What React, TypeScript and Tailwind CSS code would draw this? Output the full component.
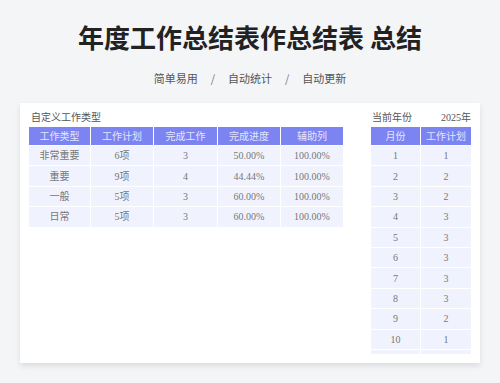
import { Fragment } from 'react';

const types = [
  { name: '非常重要', plan: '6项', done: '3', progress: '50.00%', aux: '100.00%' },
  { name: '重要', plan: '9项', done: '4', progress: '44.44%', aux: '100.00%' },
  { name: '一般', plan: '5项', done: '3', progress: '60.00%', aux: '100.00%' },
  { name: '日常', plan: '5项', done: '3', progress: '60.00%', aux: '100.00%' },
];

const months = [
  ['1', '1'],
  ['2', '2'],
  ['3', '2'],
  ['4', '3'],
  ['5', '3'],
  ['6', '3'],
  ['7', '3'],
  ['8', '3'],
  ['9', '2'],
  ['10', '1'],
  ['', ''],
];

const sheetFont = { fontFamily: '"Liberation Serif", "Noto Sans CJK SC", serif' };

function HeaderCell({ children }: { children: React.ReactNode }) {
  return (
    <div className="h-[18px] bg-[#7b84f1] text-[#e3e6ff] flex items-center justify-center text-[10px]">
      {children}
    </div>
  );
}

function BodyCell({ children }: { children: React.ReactNode }) {
  return (
    <div className="h-[19.4px] bg-[#f0f3fe] text-[#777777] flex items-center justify-center text-[10px]">
      {children}
    </div>
  );
}

export default function App() {
  return (
    <div
      className="w-[500px] h-[383px] bg-[#f4f5f7] overflow-hidden flex flex-col items-center"
      style={{ fontFamily: '"Noto Sans CJK SC", "Noto Sans", sans-serif' }}
    >
      <h1 className="mt-[22px] h-[30px] leading-[30px] text-[26px] font-bold text-[#222222]">
        年度工作总结表作总结表 总结
      </h1>
      <div className="mt-[18px] h-[16px] flex items-center gap-[13px] text-[11px] text-[#555555]">
        <span>简单易用</span>
        <span className="text-[#777777]">/</span>
        <span>自动统计</span>
        <span className="text-[#777777]">/</span>
        <span>自动更新</span>
      </div>

      <div className="mt-[17px] w-[460px] h-[260px] bg-white shadow-[0_3px_6px_rgba(0,0,0,0.1)] px-[9px] pt-[5px] pb-[9px]">
        <div className="h-full flex justify-between overflow-hidden" style={sheetFont}>
          <div className="w-[314px]">
            <div className="h-[19px] flex items-center pl-[2px] text-[10px] text-[#555555]">自定义工作类型</div>
            <div className="grid grid-cols-[61px_62px_63px_62px_62px] gap-px bg-white">
              <HeaderCell>工作类型</HeaderCell>
              <HeaderCell>工作计划</HeaderCell>
              <HeaderCell>完成工作</HeaderCell>
              <HeaderCell>完成进度</HeaderCell>
              <HeaderCell>辅助列</HeaderCell>
              {types.map((t) => (
                <Fragment key={t.name}>
                  <BodyCell>{t.name}</BodyCell>
                  <BodyCell>{t.plan}</BodyCell>
                  <BodyCell>{t.done}</BodyCell>
                  <BodyCell>{t.progress}</BodyCell>
                  <BodyCell>{t.aux}</BodyCell>
                </Fragment>
              ))}
            </div>
          </div>

          <div className="w-[100px] h-[249px] overflow-hidden">
            <div className="h-[19px] flex items-center justify-between pl-[1px] text-[10px] text-[#555555]">
              <span>当前年份</span>
              <span>2025年</span>
            </div>
            <div className="grid grid-cols-[49px_50px] gap-px bg-white">
              <HeaderCell>月份</HeaderCell>
              <HeaderCell>工作计划</HeaderCell>
              {months.map(([m, p], i) => (
                <Fragment key={i}>
                  <BodyCell>{m}</BodyCell>
                  <BodyCell>{p}</BodyCell>
                </Fragment>
              ))}
            </div>
          </div>
        </div>
      </div>
    </div>
  );
}
